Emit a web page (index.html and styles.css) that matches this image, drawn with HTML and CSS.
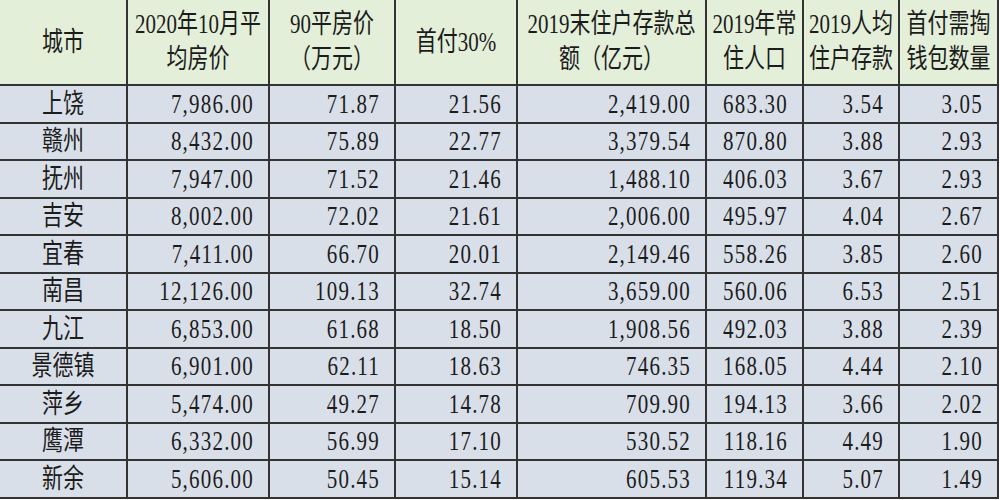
FILE: index.html
```html
<!DOCTYPE html>
<html lang="zh-CN">
<head>
<meta charset="utf-8">
<title>江西各市房价</title>
<link rel="stylesheet" href="styles.css">
</head>
<body>
<table class="sheet">
  <colgroup>
    <col class="c1"><col class="c2"><col class="c3"><col class="c4"><col class="c5"><col class="c6"><col class="c7"><col class="c8">
  </colgroup>
  <thead>
    <tr>
      <th><span class="t">城市</span></th>
      <th><span class="t">2020年10月平<br>均房价</span></th>
      <th><span class="t">90平房价<br>（万元）</span></th>
      <th><span class="t">首付30%</span></th>
      <th><span class="t">2019末住户存款总<br>额（亿元）</span></th>
      <th><span class="t">2019年常<br>住人口</span></th>
      <th><span class="t">2019人均<br>住户存款</span></th>
      <th><span class="t">首付需掏<br>钱包数量</span></th>
    </tr>
  </thead>
  <tbody>
    <tr><td class="city"><span class="t">上饶</span></td><td><span class="t">7,986.00</span></td><td><span class="t">71.87</span></td><td><span class="t">21.56</span></td><td><span class="t">2,419.00</span></td><td><span class="t">683.30</span></td><td><span class="t">3.54</span></td><td><span class="t">3.05</span></td></tr>
    <tr><td class="city"><span class="t">赣州</span></td><td><span class="t">8,432.00</span></td><td><span class="t">75.89</span></td><td><span class="t">22.77</span></td><td><span class="t">3,379.54</span></td><td><span class="t">870.80</span></td><td><span class="t">3.88</span></td><td><span class="t">2.93</span></td></tr>
    <tr><td class="city"><span class="t">抚州</span></td><td><span class="t">7,947.00</span></td><td><span class="t">71.52</span></td><td><span class="t">21.46</span></td><td><span class="t">1,488.10</span></td><td><span class="t">406.03</span></td><td><span class="t">3.67</span></td><td><span class="t">2.93</span></td></tr>
    <tr><td class="city"><span class="t">吉安</span></td><td><span class="t">8,002.00</span></td><td><span class="t">72.02</span></td><td><span class="t">21.61</span></td><td><span class="t">2,006.00</span></td><td><span class="t">495.97</span></td><td><span class="t">4.04</span></td><td><span class="t">2.67</span></td></tr>
    <tr><td class="city"><span class="t">宜春</span></td><td><span class="t">7,411.00</span></td><td><span class="t">66.70</span></td><td><span class="t">20.01</span></td><td><span class="t">2,149.46</span></td><td><span class="t">558.26</span></td><td><span class="t">3.85</span></td><td><span class="t">2.60</span></td></tr>
    <tr><td class="city"><span class="t">南昌</span></td><td><span class="t">12,126.00</span></td><td><span class="t">109.13</span></td><td><span class="t">32.74</span></td><td><span class="t">3,659.00</span></td><td><span class="t">560.06</span></td><td><span class="t">6.53</span></td><td><span class="t">2.51</span></td></tr>
    <tr><td class="city"><span class="t">九江</span></td><td><span class="t">6,853.00</span></td><td><span class="t">61.68</span></td><td><span class="t">18.50</span></td><td><span class="t">1,908.56</span></td><td><span class="t">492.03</span></td><td><span class="t">3.88</span></td><td><span class="t">2.39</span></td></tr>
    <tr><td class="city"><span class="t">景德镇</span></td><td><span class="t">6,901.00</span></td><td><span class="t">62.11</span></td><td><span class="t">18.63</span></td><td><span class="t">746.35</span></td><td><span class="t">168.05</span></td><td><span class="t">4.44</span></td><td><span class="t">2.10</span></td></tr>
    <tr><td class="city"><span class="t">萍乡</span></td><td><span class="t">5,474.00</span></td><td><span class="t">49.27</span></td><td><span class="t">14.78</span></td><td><span class="t">709.90</span></td><td><span class="t">194.13</span></td><td><span class="t">3.66</span></td><td><span class="t">2.02</span></td></tr>
    <tr><td class="city"><span class="t">鹰潭</span></td><td><span class="t">6,332.00</span></td><td><span class="t">56.99</span></td><td><span class="t">17.10</span></td><td><span class="t">530.52</span></td><td><span class="t">118.16</span></td><td><span class="t">4.49</span></td><td><span class="t">1.90</span></td></tr>
    <tr><td class="city"><span class="t">新余</span></td><td><span class="t">5,606.00</span></td><td><span class="t">50.45</span></td><td><span class="t">15.14</span></td><td><span class="t">605.53</span></td><td><span class="t">119.34</span></td><td><span class="t">5.07</span></td><td><span class="t">1.49</span></td></tr>
  </tbody>
</table>
</body>
</html>
```
FILE: styles.css
```css
html, body {
  margin: 0;
  padding: 0;
  background: #ffffff;
}

.sheet {
  width: 998px;
  table-layout: fixed;
  border-collapse: collapse;
  font-family: "Liberation Serif", "Noto Sans CJK SC", serif;
  font-size: 21px;
  color: #1c1c1c;
}

.c1 { width: 127px; }
.c2 { width: 142px; }
.c3 { width: 126px; }
.c4 { width: 122px; }
.c5 { width: 189px; }
.c6 { width: 97px; }
.c7 { width: 96px; }
.c8 { width: 99px; }

.sheet th,
.sheet td {
  border: 2px solid #333333;
  padding: 0;
  overflow: hidden;
  white-space: nowrap;
}

.sheet tr > :first-child {
  border-left: none;
}

.sheet thead th {
  border-top: none;
  height: 84px;
  background: #e3efd9;
  font-weight: normal;
  text-align: center;
  vertical-align: middle;
}

.sheet thead .t {
  line-height: 27px;
}

.sheet td {
  height: 35.5px;
  background: #d9dfe9;
  text-align: right;
  padding-right: 14px;
  vertical-align: middle;
  letter-spacing: 1.2px;
}

.sheet td.city {
  text-align: center;
  padding-right: 0;
  letter-spacing: 0;
}

.t {
  display: inline-block;
  line-height: 26px;
  transform: scaleY(1.28);
}
```
